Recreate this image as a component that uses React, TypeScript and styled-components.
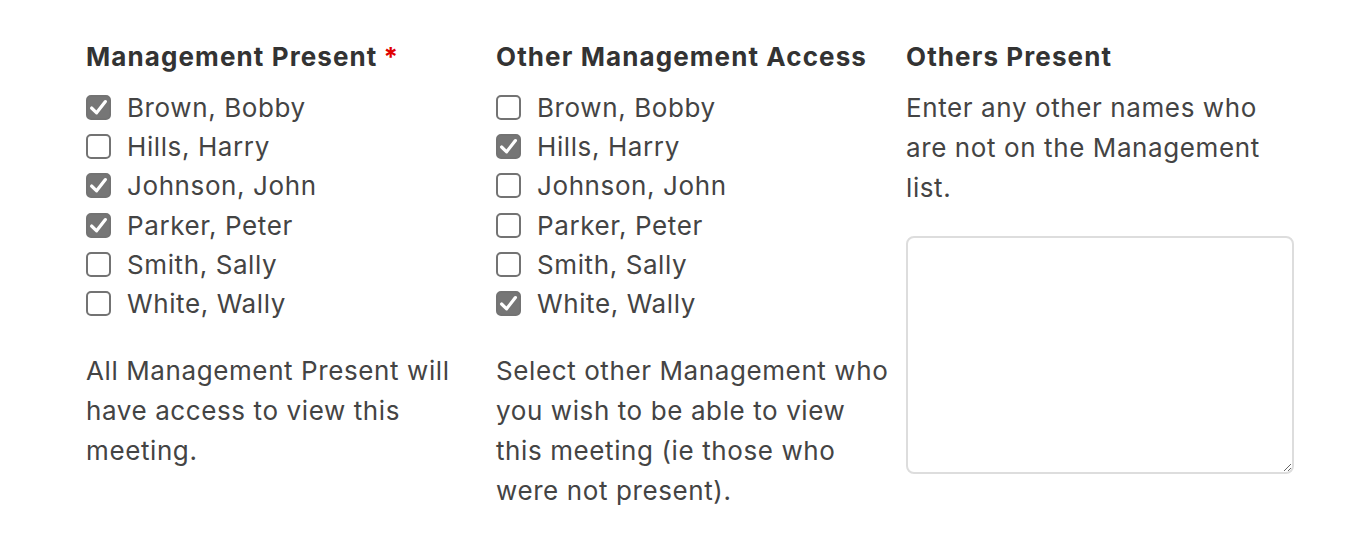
import React, { useState } from 'react';
import styled, { createGlobalStyle } from 'styled-components';

const GlobalStyle = createGlobalStyle`
  html, body {
    margin: 0;
    padding: 0;
    background: #ffffff;
  }
  body {
    font-family: Inter, "Noto Sans", "Liberation Sans", sans-serif;
    color: #444444;
  }
`;

const Page = styled.div`
  padding: 37px 0 0 86px;
`;

const Columns = styled.div`
  display: grid;
  grid-template-columns: 396px 396px 396px;
  column-gap: 14px;
`;

const Column = styled.div`
  display: flex;
  flex-direction: column;
`;

const Heading = styled.h3`
  margin: 0 0 11px 0;
  font-size: 26px;
  line-height: 40px;
  font-weight: 700;
  letter-spacing: 1.1px;
  color: #333333;
`;

const Required = styled.span`
  color: #e00000;
  margin-left: 6px;
`;

const List = styled.div`
  display: flex;
  flex-direction: column;
`;

const Row = styled.label`
  display: flex;
  align-items: center;
  height: 39.2px;
  font-size: 26px;
  letter-spacing: 0.6px;
  color: #444444;
  cursor: pointer;
`;

const Box = styled.span<{ $checked: boolean }>`
  box-sizing: border-box;
  width: 25px;
  height: 25px;
  margin-right: 16px;
  border-radius: 5px;
  border: 2px solid #737373;
  background: ${({ $checked }) => ($checked ? '#767676' : '#ffffff')};
  display: flex;
  align-items: center;
  justify-content: center;
  flex-shrink: 0;
`;

const HiddenInput = styled.input`
  display: none;
`;

const Help = styled.p<{ $top: number }>`
  margin: ${({ $top }) => $top}px 0 0 0;
  font-size: 26px;
  line-height: 40px;
  letter-spacing: 0.6px;
  color: #444444;
`;

const TextArea = styled.textarea`
  box-sizing: border-box;
  margin-top: 28px;
  width: 388px;
  height: 238px;
  border: 2px solid #dddddd;
  border-radius: 8px;
  resize: vertical;
  font-family: inherit;
  font-size: 26px;
  outline: none;
`;

const names = ['Brown, Bobby', 'Hills, Harry', 'Johnson, John', 'Parker, Peter', 'Smith, Sally', 'White, Wally'];

const CheckList: React.FC<{ initial: boolean[] }> = ({ initial }) => {
  const [checked, setChecked] = useState(initial);
  return (
    <List>
      {names.map((n, i) => (
        <Row key={n}>
          <HiddenInput
            type="checkbox"
            checked={checked[i]}
            onChange={() => setChecked(c => c.map((v, j) => (j === i ? !v : v)))}
          />
          <Box $checked={checked[i]}>
            {checked[i] && (
              <svg width="21" height="21" viewBox="0 0 21 21">
                <path d="M3.6 11 L8.6 15.8 L17.4 4.6" fill="none" stroke="#fff" strokeWidth="3.2" strokeLinecap="round" strokeLinejoin="round" />
              </svg>
            )}
          </Box>
          {n}
        </Row>
      ))}
    </List>
  );
};

export default function App() {
  return (
    <Page>
      <GlobalStyle />
      <Columns>
        <Column>
          <Heading>
            Management Present<Required>*</Required>
          </Heading>
          <CheckList initial={[true, false, true, true, false, false]} />
          <Help $top={28}>All Management Present will have access to view this meeting.</Help>
        </Column>
        <Column>
          <Heading>Other Management Access</Heading>
          <CheckList initial={[false, true, false, false, false, true]} />
          <Help $top={28}>Select other Management who you wish to be able to view this meeting (ie those who were not present).</Help>
        </Column>
        <Column>
          <Heading>Others Present</Heading>
          <Help $top={0}>Enter any other names who are not on the Management list.</Help>
          <TextArea />
        </Column>
      </Columns>
    </Page>
  );
}
